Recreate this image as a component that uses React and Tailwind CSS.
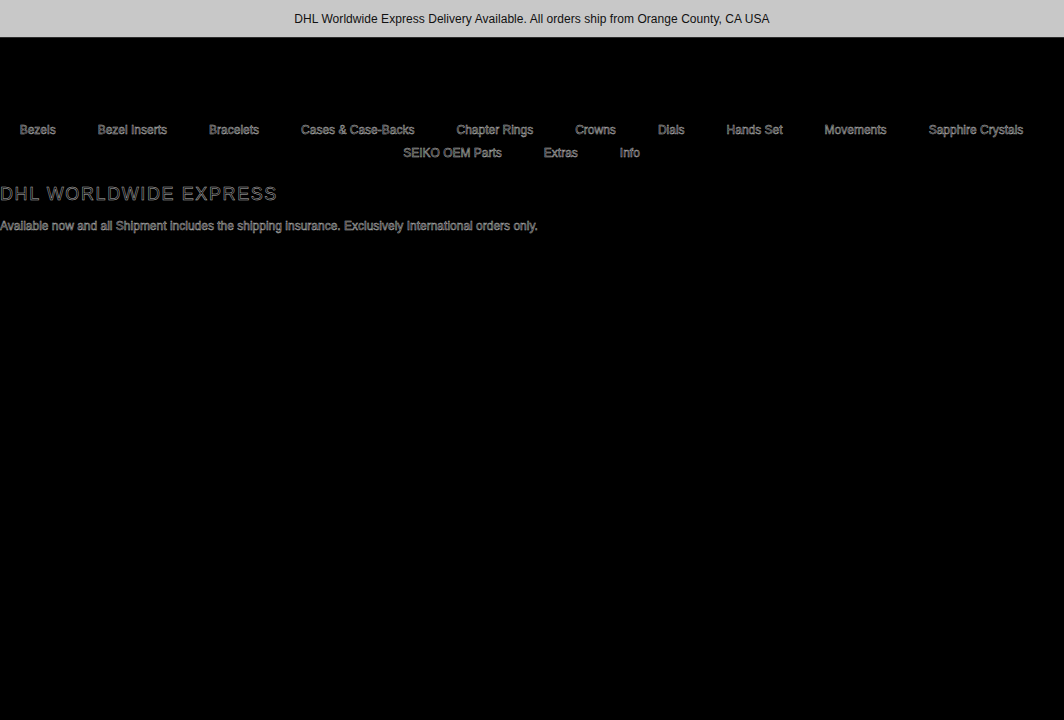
const navTop = [
  'Bezels',
  'Bezel Inserts',
  'Bracelets',
  'Cases & Case-Backs',
  'Chapter Rings',
  'Crowns',
  'Dials',
  'Hands Set',
  'Movements',
  'Sapphire Crystals',
  'SEIKO OEM Parts',
  'Extras',
  'Info',
]

/* ── outlined text, as the page renders it ───────────────────────────── */
const hollow = 'text-black [-webkit-text-stroke:0.5px_#b5b5b5]'

export default function App() {
  return (
    <div className="min-h-[720px] bg-black font-['Liberation_Sans',Arial,sans-serif]">
      {/* announcement bar */}
      <div className="h-[38px] flex items-center justify-center bg-[#c8c8c8] border-b border-[#2e2e2e] text-[12px] tracking-[0.05px] text-[#111]">
        DHL Worldwide Express Delivery Available. All orders ship from Orange County, CA USA
      </div>

      {/* header spacer (logo area) */}
      <div className="h-[85px]" />

      {/* category nav */}
      <nav className="flex flex-wrap justify-center gap-x-[42px] gap-y-[8px] pr-[21px] text-[12px] leading-[15px]">
        {navTop.map((item) => (
          <a key={item} href="#" className={hollow}>
            {item}
          </a>
        ))}
      </nav>

      {/* content */}
      <div className="mt-[21px]">
        <h1 className={`text-[18px] leading-[24px] tracking-[1.6px] uppercase ${hollow}`}>
          DHL Worldwide Express
        </h1>
        <p className={`mt-[12px] text-[12px] leading-[16px] ${hollow}`}>
          Available now and all Shipment includes the shipping insurance. Exclusively International orders only.
        </p>
      </div>
    </div>
  )
}
